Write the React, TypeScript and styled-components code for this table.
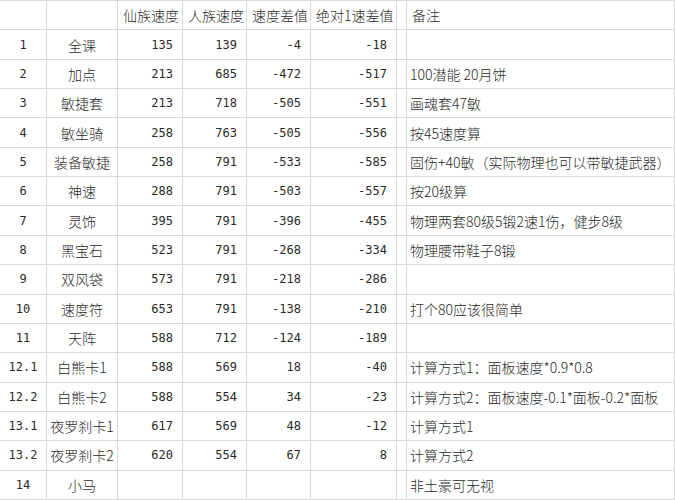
import React from "react";
import styled, { createGlobalStyle } from "styled-components";

const GlobalStyle = createGlobalStyle`
  html, body { margin: 0; padding: 0; background: #ffffff; }
  body { font-family: "Noto Sans CJK SC", "Noto Sans", sans-serif; color: #2a2a2a; }
`;

const Sheet = styled.div`
  width: 675px;
  height: 500px;
  box-sizing: border-box;
  display: grid;
  grid-template-columns: 46px 70px 64px 63px 63px 85px 9px 267px;
  grid-template-rows: repeat(17, 1fr);
  gap: 1px;
  padding: 1px 1px 1px 0;
  background: #d8d8d8;
  overflow: hidden;
`;

const Cell = styled.div`
  background: #ffffff;
  display: flex;
  align-items: center;
  min-width: 0;
  overflow: hidden;
  white-space: pre;
  font-size: 14px;
  font-weight: 300;
  line-height: 1;
  color: #2a2a2a;
`;

const HeaderCell = styled(Cell)`
  justify-content: flex-start;
  padding-left: 5px;
`;

const IndexCell = styled(Cell)`
  justify-content: center;
  font-family: "DejaVu Sans Mono", monospace;
  font-size: 12px;
  font-weight: 400;
`;

const NameCell = styled(Cell)`
  justify-content: center;
`;

const NumCell = styled(Cell)`
  justify-content: flex-end;
  padding-right: 9px;
  font-family: "DejaVu Sans Mono", monospace;
  font-size: 12px;
  font-weight: 400;
`;

const SpacerCell = styled(Cell)``;

const NoteCell = styled(Cell)`
  justify-content: flex-start;
  padding-left: 3px;
`;

type Row = {
  idx: string;
  name: string;
  xian: string;
  ren: string;
  diff: string;
  abs: string;
  note: string;
};

const rows: Row[] = [
  { idx: "1", name: "全课", xian: "135", ren: "139", diff: "-4", abs: "-18", note: "" },
  { idx: "2", name: "加点", xian: "213", ren: "685", diff: "-472", abs: "-517", note: "100潜能 20月饼" },
  { idx: "3", name: "敏捷套", xian: "213", ren: "718", diff: "-505", abs: "-551", note: "画魂套47敏" },
  { idx: "4", name: "敏坐骑", xian: "258", ren: "763", diff: "-505", abs: "-556", note: "按45速度算" },
  { idx: "5", name: "装备敏捷", xian: "258", ren: "791", diff: "-533", abs: "-585", note: "固伤+40敏（实际物理也可以带敏捷武器）" },
  { idx: "6", name: "神速", xian: "288", ren: "791", diff: "-503", abs: "-557", note: "按20级算" },
  { idx: "7", name: "灵饰", xian: "395", ren: "791", diff: "-396", abs: "-455", note: "物理两套80级5锻2速1伤，健步8级" },
  { idx: "8", name: "黑宝石", xian: "523", ren: "791", diff: "-268", abs: "-334", note: "物理腰带鞋子8锻" },
  { idx: "9", name: "双风袋", xian: "573", ren: "791", diff: "-218", abs: "-286", note: "" },
  { idx: "10", name: "速度符", xian: "653", ren: "791", diff: "-138", abs: "-210", note: "打个80应该很简单" },
  { idx: "11", name: "天阵", xian: "588", ren: "712", diff: "-124", abs: "-189", note: "" },
  { idx: "12.1", name: "白熊卡1", xian: "588", ren: "569", diff: "18", abs: "-40", note: "计算方式1：面板速度*0.9*0.8" },
  { idx: "12.2", name: "白熊卡2", xian: "588", ren: "554", diff: "34", abs: "-23", note: "计算方式2：面板速度-0.1*面板-0.2*面板" },
  { idx: "13.1", name: "夜罗刹卡1", xian: "617", ren: "569", diff: "48", abs: "-12", note: "计算方式1" },
  { idx: "13.2", name: "夜罗刹卡2", xian: "620", ren: "554", diff: "67", abs: "8", note: "计算方式2" },
  { idx: "14", name: "小马", xian: "", ren: "", diff: "", abs: "", note: "非土豪可无视" },
];

export default function App() {
  return (
    <>
      <GlobalStyle />
      <Sheet>
        <HeaderCell />
        <HeaderCell />
        <HeaderCell>仙族速度</HeaderCell>
        <HeaderCell>人族速度</HeaderCell>
        <HeaderCell>速度差值</HeaderCell>
        <HeaderCell>绝对1速差值</HeaderCell>
        <SpacerCell />
        <HeaderCell>备注</HeaderCell>
        {rows.map((r) => (
          <React.Fragment key={r.idx}>
            <IndexCell>{r.idx}</IndexCell>
            <NameCell>{r.name}</NameCell>
            <NumCell>{r.xian}</NumCell>
            <NumCell>{r.ren}</NumCell>
            <NumCell>{r.diff}</NumCell>
            <NumCell>{r.abs}</NumCell>
            <SpacerCell />
            <NoteCell>{r.note}</NoteCell>
          </React.Fragment>
        ))}
      </Sheet>
    </>
  );
}
